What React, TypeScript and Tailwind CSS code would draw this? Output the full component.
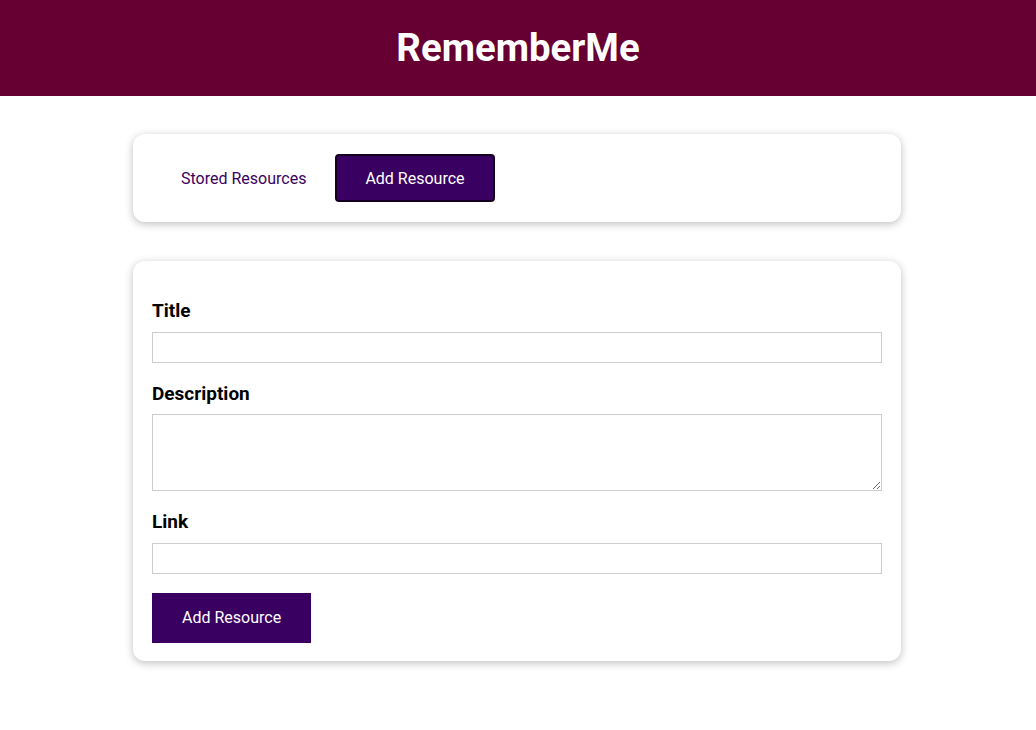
import React from "react";

export default function App() {
  return (
    <div className="min-h-[730px] bg-white" style={{ fontFamily: "Roboto, 'Liberation Sans', sans-serif" }}>
      <header className="flex h-24 w-full items-center justify-center bg-[#660033]">
        <h1 className="m-0 text-[38.4px] font-bold leading-none text-white">RememberMe</h1>
      </header>

      <div className="ml-[133px] mt-[38px] w-[768px] rounded-xl bg-white px-[19px] py-[20px] shadow-[0_2px_8px_rgba(0,0,0,0.26)]">
        <div className="flex">
          <button className="h-[48px] px-[29px] pt-px text-[16px] text-[#3a0061]">Stored Resources</button>
          <button className="h-[48px] rounded-[4px] border-2 border-[#160020] bg-[#3a0061] px-[28px] pt-px text-[16px] text-white">
            Add Resource
          </button>
        </div>
      </div>

      <div className="ml-[133px] mt-[39px] w-[768px] rounded-xl bg-white px-[19px] pb-[18px] pt-[38px] shadow-[0_2px_8px_rgba(0,0,0,0.26)]">
        <form onSubmit={(e) => e.preventDefault()}>
          <div className="mb-[19px]">
            <label className="mb-[9px] block text-[19px] font-bold leading-6 text-black">Title</label>
            <input type="text" className="block h-[31px] w-full border border-[#ccc] px-[2px] text-[16px] outline-none" />
          </div>
          <div className="mb-[19px]">
            <label className="mb-[8px] block text-[19px] font-bold leading-6 text-black">Description</label>
            <textarea className="block h-[77px] w-full border border-[#ccc] px-[2px] text-[16px] outline-none" />
          </div>
          <div className="mb-[19px]">
            <label className="mb-[9px] block text-[19px] font-bold leading-6 text-black">Link</label>
            <input type="url" className="block h-[31px] w-full border border-[#ccc] px-[2px] text-[16px] outline-none" />
          </div>
          <button type="submit" className="h-[50px] bg-[#3a0061] px-[30px] text-[16px] text-white">
            Add Resource
          </button>
        </form>
      </div>
    </div>
  );
}
